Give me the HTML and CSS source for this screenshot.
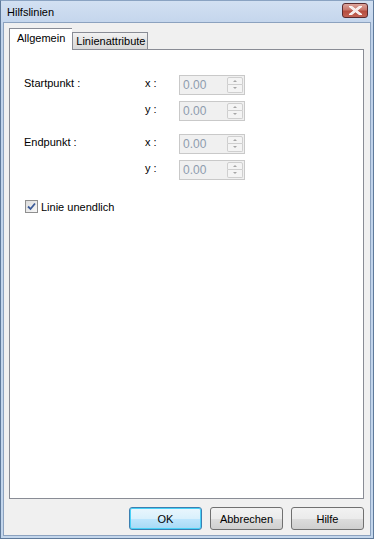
FILE: index.html
```html
<!DOCTYPE html>
<html lang="de">
<head>
    <meta charset="UTF-8">
    <title>Hilfslinien</title>
    <link rel="stylesheet" href="styles.css">
</head>
<body>
    <div class="window">
        <div class="titlebar">
            <span class="title">Hilfslinien</span>
            <button class="close-btn">
                <svg width="13" height="9" viewBox="0 0 13 9"><path d="M1.5 0.5 L11.5 8.5 M11.5 0.5 L1.5 8.5" stroke="#fff" stroke-width="2.6" stroke-linecap="square"/><path d="M1.5 0.5 L11.5 8.5 M11.5 0.5 L1.5 8.5" stroke="#f4eaea" stroke-width="1.4"/></svg>
            </button>
        </div>
        <div class="client">
            <div class="tabs">
                <div class="tab active">Allgemein</div>
                <div class="tab">Linienattribute</div>
            </div>
            <div class="panel">
                <div class="form-grid">
                    <div class="label">Startpunkt :</div>
                    <div class="axis">x :</div>
                    <div class="spin"><span class="value">0.00</span><span class="arrows"><span class="arr up"></span><span class="arr down"></span></span></div>
                    <div class="label"></div>
                    <div class="axis">y :</div>
                    <div class="spin"><span class="value">0.00</span><span class="arrows"><span class="arr up"></span><span class="arr down"></span></span></div>
                </div>
                <div class="form-grid second">
                    <div class="label">Endpunkt :</div>
                    <div class="axis">x :</div>
                    <div class="spin"><span class="value">0.00</span><span class="arrows"><span class="arr up"></span><span class="arr down"></span></span></div>
                    <div class="label"></div>
                    <div class="axis">y :</div>
                    <div class="spin"><span class="value">0.00</span><span class="arrows"><span class="arr up"></span><span class="arr down"></span></span></div>
                </div>
                <label class="check">
                    <span class="box">
                        <svg width="9" height="9" viewBox="0 0 9 9"><path d="M1 4.5 L3.5 7 L8 1.5" fill="none" stroke="#3b5b99" stroke-width="1.8"/></svg>
                    </span>
                    Linie unendlich
                </label>
            </div>
            <div class="buttons">
                <button class="btn default">OK</button>
                <button class="btn">Abbrechen</button>
                <button class="btn">Hilfe</button>
            </div>
        </div>
    </div>
</body>
</html>
```

FILE: styles.css
```css
body {
    margin: 0;
    padding: 0;
    font-family: "Liberation Sans", Arial, sans-serif;
    font-size: 11px;
    color: #000;
    background-color: #fff;
}
.window {
    width: 374px;
    height: 539px;
    box-sizing: border-box;
    display: flex;
    flex-direction: column;
    border: 1px solid #5f7a9b;
    border-top-color: #8aa3c2;
    background: linear-gradient(#d2e0f2, #bfd2ea 30px, #c3d6ec);
}
.titlebar {
    height: 21px;
    display: flex;
    align-items: center;
    justify-content: space-between;
    padding: 0 5px 0 6px;
}
.title {
    font-size: 11px;
    color: #000;
}
.close-btn {
    width: 26px;
    height: 15px;
    margin-top: -3px;
    padding: 0;
    border: 1px solid #5a2a2e;
    border-radius: 3px;
    background: linear-gradient(#dca49c, #c8766b 45%, #b54c3e 55%, #c26456);
    display: flex;
    align-items: center;
    justify-content: center;
}
.client {
    flex: 1;
    margin: 0 2px 2px 2px;
    border: 1px solid #8ca2bf;
    background-color: #f0f0f0;
    display: flex;
    flex-direction: column;
    padding: 6px 6px 5px 5px;
}
.tabs {
    display: flex;
    align-items: flex-end;
    height: 20px;
    position: relative;
    z-index: 1;
}
.tab {
    height: 16px;
    padding: 0 2px 0 3px;
    line-height: 16px;
    border: 1px solid #898c95;
    border-bottom: none;
    background: linear-gradient(#f2f2f2, #e3e3e3 50%, #d9d9d9);
}
.tab.active {
    height: 21px;
    line-height: 19px;
    padding: 0 7px;
    background: #fff;
    margin-bottom: -1px;
    border-right: none;
}
.panel {
    flex: 1;
    background: #fff;
    border: 1px solid #898c95;
    padding: 25px 0 0 14px;
}
.form-grid {
    display: grid;
    grid-template-columns: 121px 34px 66px;
    grid-auto-rows: 20px;
    row-gap: 6px;
}
.form-grid.second {
    margin-top: 13px;
}
.label, .axis {
    padding-top: 2px;
}
.spin {
    box-sizing: border-box;
    height: 20px;
    border: 1px solid #c9c9c9;
    background: #f0f0f0;
    display: flex;
    align-items: center;
    justify-content: space-between;
    padding: 0 1px 0 3px;
}
.value {
    color: #8e9cae;
    font-size: 12px;
}
.arrows {
    display: flex;
    flex-direction: column;
}
.arr {
    box-sizing: border-box;
    width: 16px;
    height: 8px;
    border: 1px solid #cfcfcf;
    background: #f4f4f4;
    position: relative;
}
.arr.up {
    border-radius: 2px 2px 0 0;
}
.arr.down {
    border-radius: 0 0 2px 2px;
    border-top: none;
}
.arr::after {
    content: "";
    position: absolute;
    left: 5px;
    top: 2px;
    border-left: 2.5px solid transparent;
    border-right: 2.5px solid transparent;
}
.arr.up::after {
    border-bottom: 2.5px solid #a6a6a6;
}
.arr.down::after {
    border-top: 2.5px solid #a6a6a6;
}
.check {
    display: flex;
    align-items: center;
    gap: 3px;
    margin-top: 20px;
    margin-left: 1px;
}
.box {
    box-sizing: border-box;
    width: 13px;
    height: 13px;
    border: 1px solid #8f8f8f;
    background: linear-gradient(135deg, #dcdcdc, #f8f8f8);
    display: flex;
    align-items: center;
    justify-content: center;
}
.buttons {
    display: flex;
    justify-content: flex-end;
    gap: 8px;
    padding-top: 8px;
}
.btn {
    width: 73px;
    height: 23px;
    font-family: "Liberation Sans", Arial, sans-serif;
    font-size: 11px;
    color: #000;
    border: 1px solid #707070;
    border-radius: 3px;
    background: linear-gradient(#f2f2f2, #ebebeb 50%, #dddddd 51%, #cfcfcf);
    padding: 0;
}
.btn.default {
    border-color: #3c7fb1;
    box-shadow: inset 0 0 0 1px #48d1f7;
    background: linear-gradient(#eaf6fd, #d9f0fc 50%, #bee6fd 51%, #a7d9f5);
}
```
